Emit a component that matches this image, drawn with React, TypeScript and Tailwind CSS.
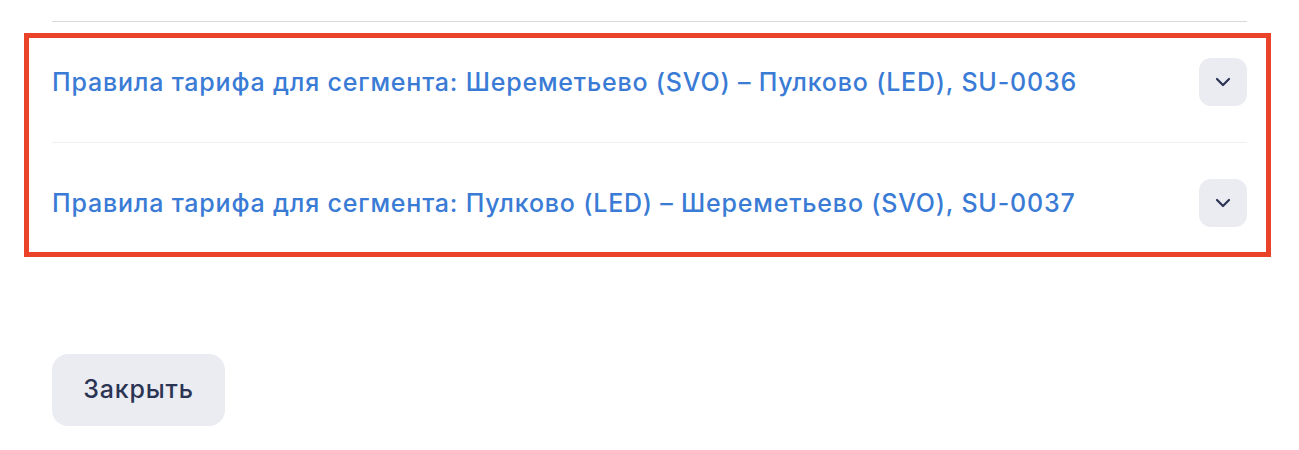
import React from 'react'

const segments = [
    'Правила тарифа для сегмента: Шереметьево (SVO) – Пулково (LED), SU-0036',
    'Правила тарифа для сегмента: Пулково (LED) – Шереметьево (SVO), SU-0037',
]

const Chevron = () => (
    <svg width="16" height="10" viewBox="0 0 16 10" fill="none">
        <path d="M2 2l6 6 6-6" stroke="#2b3453" strokeWidth="2.2" strokeLinecap="round" strokeLinejoin="round" />
    </svg>
)

const App = () => {
    return (
        <div className="relative w-[1299px] h-[450px] bg-white font-['Inter','Liberation_Sans',sans-serif]">
            <div className="px-[52px] pt-[21px]">
                <div className="border-t border-[#d9d9dc]">
                    {segments.map((title, i) => (
                        <div
                            key={title}
                            className={`flex items-center justify-between py-[36px] ${i > 0 ? 'border-t border-[#f0f0f2]' : ''}`}
                        >
                            <span className="text-[25px] font-medium text-[#3a7bd5] tracking-[0.8px] leading-none">{title}</span>
                            <button className="w-12 h-12 rounded-xl bg-[#ebecf2] flex items-center justify-center">
                                <Chevron />
                            </button>
                        </div>
                    ))}
                </div>
                <div className="mt-[91px]">
                    <button className="w-[173px] h-[72px] rounded-2xl bg-[#ebecf2] text-[25px] font-medium text-[#2b3453] tracking-[0.8px]">
                        Закрыть
                    </button>
                </div>
            </div>
            <div className="absolute left-[24px] top-[33px] w-[1247px] h-[224px] border-[5px] border-[#ea4329] pointer-events-none" />
        </div>
    )
}

export default App
